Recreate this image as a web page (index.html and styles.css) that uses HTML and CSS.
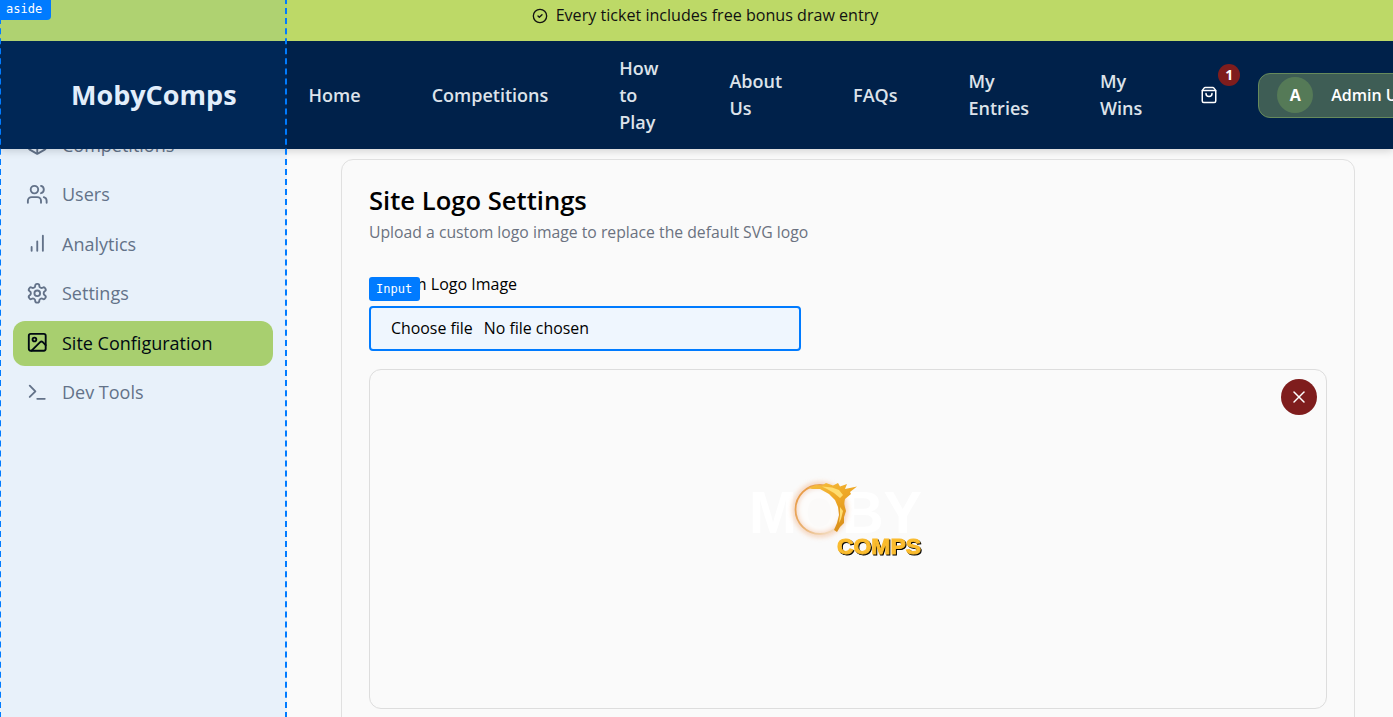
FILE: index.html
```html
<!DOCTYPE html>
<html lang="en">
<head>
<meta charset="utf-8">
<title>MobyComps - Site Configuration</title>
<link rel="stylesheet" href="styles.css">
</head>
<body>
<div class="shell">
  <div class="top">
    <div class="banner">
      <svg class="ic banner-ic" viewBox="0 0 24 24"><circle cx="12" cy="12" r="10"/><path d="m9 12 2 2 4-4"/></svg>
      <span>Every ticket includes free bonus draw entry</span>
    </div>
    <header class="header">
      <div class="brand">MobyComps</div>
      <nav class="topnav">
        <a>Home</a><a>Competitions</a><a>How to Play</a><a>About Us</a><a>FAQs</a><a>My Entries</a><a>My Wins</a>
      </nav>
      <div class="cart">
        <svg class="ic cart-ic" viewBox="0 0 24 24"><path d="M16 10a4 4 0 0 1-8 0"/><path d="M3.103 6.034h17.794"/><path d="M3.4 5.467a2 2 0 0 0-.4 1.2V20a2 2 0 0 0 2 2h14a2 2 0 0 0 2-2V6.667a2 2 0 0 0-.4-1.2l-2-2.667A2 2 0 0 0 17 2H7a2 2 0 0 0-1.6.8z"/></svg>
        <span class="cart-badge">1</span>
      </div>
      <div class="user"><span class="avatar">A</span><span class="user-name">Admin User</span></div>
    </header>
  </div>
  <div class="body">
    <aside class="side">
      <div class="side-list">
        <a class="side-item"><svg class="ic" viewBox="0 0 24 24"><path d="M21 8a2 2 0 0 0-1-1.73l-7-4a2 2 0 0 0-2 0l-7 4A2 2 0 0 0 3 8v8a2 2 0 0 0 1 1.73l7 4a2 2 0 0 0 2 0l7-4A2 2 0 0 0 21 16Z"/><path d="m3.3 7 8.7 5 8.7-5"/><path d="M12 22V12"/></svg>Competitions</a>
        <a class="side-item"><svg class="ic" viewBox="0 0 24 24"><path d="M16 21v-2a4 4 0 0 0-4-4H6a4 4 0 0 0-4 4v2"/><circle cx="9" cy="7" r="4"/><path d="M22 21v-2a4 4 0 0 0-3-3.87"/><path d="M16 3.13a4 4 0 0 1 0 7.75"/></svg>Users</a>
        <a class="side-item"><svg class="ic" viewBox="0 0 24 24"><path d="M12 20V10"/><path d="M18 20V4"/><path d="M6 20v-4"/></svg>Analytics</a>
        <a class="side-item"><svg class="ic" viewBox="0 0 24 24"><path d="M12.22 2h-.44a2 2 0 0 0-2 2v.18a2 2 0 0 1-1 1.73l-.43.25a2 2 0 0 1-2 0l-.15-.08a2 2 0 0 0-2.73.73l-.22.38a2 2 0 0 0 .73 2.73l.15.1a2 2 0 0 1 1 1.72v.51a2 2 0 0 1-1 1.74l-.15.09a2 2 0 0 0-.73 2.73l.22.38a2 2 0 0 0 2.73.73l.15-.08a2 2 0 0 1 2 0l.43.25a2 2 0 0 1 1 1.73V20a2 2 0 0 0 2 2h.44a2 2 0 0 0 2-2v-.18a2 2 0 0 1 1-1.73l.43-.25a2 2 0 0 1 2 0l.15.08a2 2 0 0 0 2.73-.73l.22-.39a2 2 0 0 0-.73-2.73l-.15-.08a2 2 0 0 1-1-1.74v-.5a2 2 0 0 1 1-1.74l.15-.09a2 2 0 0 0 .73-2.73l-.22-.38a2 2 0 0 0-2.73-.73l-.15.08a2 2 0 0 1-2 0l-.43-.25a2 2 0 0 1-1-1.73V4a2 2 0 0 0-2-2z"/><circle cx="12" cy="12" r="3"/></svg>Settings</a>
        <a class="side-item active"><svg class="ic" viewBox="0 0 24 24"><rect x="3" y="3" width="18" height="18" rx="2"/><circle cx="9" cy="9" r="2"/><path d="m21 15-3.086-3.086a2 2 0 0 0-2.828 0L6 21"/></svg>Site Configuration</a>
        <a class="side-item"><svg class="ic" viewBox="0 0 24 24"><path d="m4 17 6-6-6-6"/><path d="M12 19h8"/></svg>Dev Tools</a>
      </div>
    </aside>
    <main class="main">
      <section class="card">
        <h2 class="card-title">Site Logo Settings</h2>
        <p class="card-sub">Upload a custom logo image to replace the default SVG logo</p>
        <div class="field">
          <label class="field-label">Custom Logo Image</label>
          <div class="file-input"><span class="file-btn">Choose file</span><span>No file chosen</span></div>
          <span class="tag tag-input">Input</span>
        </div>
        <div class="preview">
          <svg class="logo" viewBox="0 0 200 200" width="200" height="200">
            <defs>
              <linearGradient id="ring" x1="0" y1="0" x2="0.8" y2="1">
                <stop offset="0" stop-color="#e8963c"/>
                <stop offset="0.6" stop-color="#e9b06e"/>
                <stop offset="1" stop-color="#f4e2cc"/>
              </linearGradient>
              <linearGradient id="fire" x1="0" y1="0" x2="0.6" y2="1">
                <stop offset="0" stop-color="#f6c040"/>
                <stop offset="0.5" stop-color="#eea726"/>
                <stop offset="1" stop-color="#d98f1c"/>
              </linearGradient>
              <filter id="glow" x="-40%" y="-40%" width="180%" height="180%"><feGaussianBlur stdDeviation="2.5"/></filter>
              <filter id="soft" x="-20%" y="-20%" width="140%" height="140%"><feGaussianBlur stdDeviation="0.45"/></filter>
            </defs>
            <text class="logo-moby" x="1" y="94" textLength="173" lengthAdjust="spacingAndGlyphs">MOBY</text>
            <circle cx="72" cy="70.5" r="25" fill="#fcfbf9" stroke="#f0b183" stroke-width="5" opacity=".6" filter="url(#glow)"/>
            <circle cx="72" cy="70.5" r="24.5" fill="none" stroke="url(#ring)" stroke-width="1.8" filter="url(#soft)"/>
            <path class="flame" filter="url(#soft)" d="M60 49 L68 46 L74 46.5 L78 44 L85 46.5 L90 44 L92 47.5 L99 45 L97 50 L109 47.5 L102 53 L103 55 L97 60 L96 65 L98 72 L96 78 L96 84 L92 88 L89 93 L86 91 L89 84 L91 76 L90 68 L87 61 L81 55 L72 50 L64 50 Z"/>
            <path class="flame-hi" filter="url(#soft)" d="M74 47.5 L84 48.5 L91 51 L95 56 L92 59 L86 54 L79 50 Z M92 68 L95 72 L93 80 L91 84 L92 76 Z"/>
            <text class="logo-comps" x="89" y="115" textLength="84" lengthAdjust="spacingAndGlyphs">COMPS</text>
          </svg>
          <button class="remove" type="button" aria-label="Remove logo"><svg class="ic remove-ic" viewBox="0 0 24 24"><path d="M18 6 6 18"/><path d="m6 6 12 12"/></svg></button>
        </div>
      </section>
    </main>
  </div>
  <div class="inspect"><span class="tag tag-aside">aside</span></div>
</div>
</body>
</html>
```
FILE: styles.css
```css
* { box-sizing: border-box; }
html, body { margin: 0; height: 100%; overflow: hidden; }
body { font-family: "Open Sans", "Liberation Sans", sans-serif; font-size: 16px; line-height: 24px; color: #000; background: #fafafa; }
.ic { width: 24px; height: 24px; fill: none; stroke: currentColor; stroke-width: 2; stroke-linecap: round; stroke-linejoin: round; flex: none; }

.shell { position: relative; height: 717px; display: flex; flex-direction: column; overflow: hidden; }
.top { position: relative; z-index: 2; box-shadow: 0 2px 8px rgba(0,0,0,.16); }

.banner { height: 41px; background: #bdd967; display: flex; justify-content: center; align-items: flex-start; gap: 8px; padding: 3px 0 0 17px; font-size: 16.1px; color: #111; }
.banner-ic { width: 16px; height: 16px; margin-top: 5px; }

.header { height: 108px; background: #00214a; display: flex; align-items: center; padding-left: 71px; overflow: hidden; color: #dde3ea; }
.brand { font-size: 27px; line-height: 36px; font-weight: 700; color: #f4f7fb; margin-right: 72px; flex: none; }
.topnav { display: flex; align-items: center; gap: 71px; font-size: 18px; line-height: 27px; font-weight: 600; flex: none; }
.topnav a { width: min-content; }
.cart { position: relative; margin-left: 58px; width: 18px; height: 18px; flex: none; color: #fff; }
.cart-ic { width: 18px; height: 18px; display: block; }
.cart-badge { position: absolute; left: 18px; top: -22px; width: 22px; height: 22px; border-radius: 50%; background: #7f1d1d; color: #fff; font-size: 14px; line-height: 22px; font-weight: 700; text-align: center; }
.user { margin-left: 40px; flex: none; height: 45px; display: flex; align-items: center; gap: 18px; padding: 0 18px; background: #3e5d55; border: 1px solid #668a5c; border-radius: 12px; }
.avatar { width: 36px; height: 36px; border-radius: 50%; background: #557a57; color: #fff; font-weight: 700; font-size: 16px; line-height: 36px; text-align: center; }
.user-name { font-weight: 600; color: #fff; white-space: nowrap; }

.body { flex: 1; display: flex; min-height: 0; }
.side { width: 286px; flex: none; background: #fafafa; }
.side-list { margin-top: -26.5px; padding: 0 13px; display: flex; flex-direction: column; gap: 4.5px; }
.side-item { height: 45px; display: flex; align-items: center; gap: 13.5px; padding: 0 13px 1px; border-radius: 12px; font-size: 18px; color: #6b7280; }
.side-item .ic { width: 22.5px; height: 22.5px; }
.side-item.active { background: #b5d665; color: #000; }

.main { flex: 1; min-width: 0; padding: 10px 38px 0 55px; }
.card { background: #fafafa; border: 1px solid #e0e0e0; border-radius: 12px; padding: 26px 27px 0; height: 600px; }
.card-title { margin: 0; font-size: 25.6px; line-height: 30px; font-weight: 600; }
.card-sub { margin: 3px 0 0; font-size: 15.75px; line-height: 27px; color: #6b7280; }
.field { position: relative; margin-top: 25px; }
.field-label { display: block; font-weight: 500; line-height: 27px; margin-bottom: 8px; }
.file-input { width: 432px; height: 45px; display: flex; align-items: center; gap: 11px; padding: 0 20px 2px; background: #eff6fe; border: 2px solid #007bff; border-radius: 4px; font-size: 15.9px; }
.preview { position: relative; margin-top: 18px; height: 340px; border: 1px solid #ddd; border-radius: 12px; display: flex; align-items: center; justify-content: center; }
.logo { display: block; }
.logo-moby { font-family: "Liberation Sans", sans-serif; font-weight: 700; font-size: 60px; fill: #fff; }
.logo-comps { font-family: "Liberation Sans", sans-serif; font-weight: 700; font-size: 22px; fill: #fbbc2e; stroke: #fbbc2e; stroke-width: 1; filter: drop-shadow(1px 1.5px 0 #000); }
.flame { fill: url(#fire); }
.flame-hi { fill: #ffdd70; }
.remove { position: absolute; top: 9px; right: 9px; width: 36px; height: 36px; padding: 0; border: 0; border-radius: 50%; background: #7f1d1d; color: #fff; display: flex; align-items: center; justify-content: center; }
.remove-ic { width: 20px; height: 20px; stroke-width: 1.8; }

.inspect { position: absolute; left: -1px; top: -2px; width: 288px; height: 730px; background: rgba(0,123,255,.07); border: 2px dashed #007bff; z-index: 3; }
.tag { position: absolute; background: #007bff; color: #fff; font-family: "DejaVu Sans Mono", monospace; font-size: 12px; line-height: 16px; border-radius: 3px; }
.tag-aside { left: -1px; top: 0; width: 51px; height: 20px; padding: 1px 6px; border-radius: 0 0 4px 0; }
.tag-input { left: 0; top: 6px; width: 51px; height: 24px; padding: 4px 7px; z-index: 1; }
```
